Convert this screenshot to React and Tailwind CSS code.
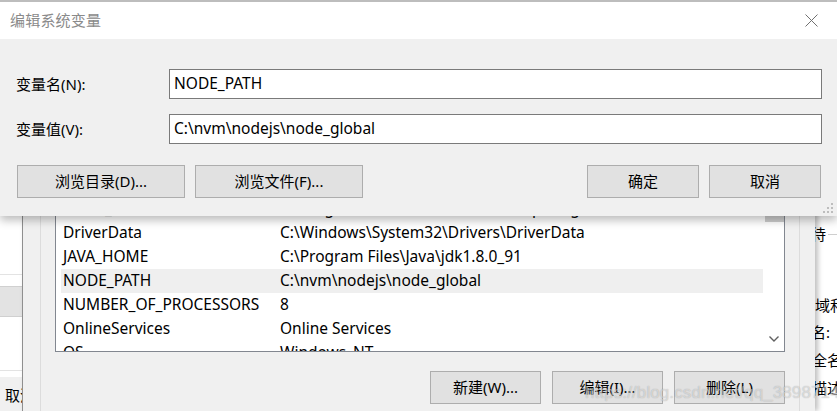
const font = "font-['Noto_Sans','Noto_Sans_CJK_SC',sans-serif]";

const rows = [
  ['ComSpec', 'C:\\Windows\\system32\\cmd.exe'],
  ['configsetroot', 'C:\\Windows\\ConfigSetRoot'],
  ['CUDA_PATH', 'C:\\Program Files\\NVIDIA GPU Computing Toolkit'],
  ['DriverData', 'C:\\Windows\\System32\\Drivers\\DriverData'],
  ['JAVA_HOME', 'C:\\Program Files\\Java\\jdk1.8.0_91'],
  ['NODE_PATH', 'C:\\nvm\\nodejs\\node_global', true],
  ['NUMBER_OF_PROCESSORS', '8'],
  ['OnlineServices', 'Online Services'],
  ['OS', 'Windows_NT'],
];

function WinButton({ children, className }) {
  return (
    <button className={`h-[33px] bg-[#e1e1e1] border border-[#adadad] text-[15px] text-black flex items-center justify-center ${className}`}>
      {children}
    </button>
  );
}

function LeftWindow() {
  return (
    <div className="absolute left-0 top-0 w-[22px] h-[411px] bg-white flex flex-col overflow-hidden">
      <div className="h-[275px] border-b border-[#e3e3e3]" />
      <div className="h-[11px]" />
      <div className="h-[31px] bg-[#e3e3e3] border-y border-[#d0d0d0]" />
      <div className="h-[54px] border-b border-[#e3e3e3]" />
      <div className="h-[6px]" />
      <div className="flex-1 bg-[#f0f0f0] pl-[5px] pt-[8px] text-[15px] leading-[20px] text-black whitespace-nowrap">取消</div>
    </div>
  );
}

function RightWindow() {
  const lines = [
    ['等待', 'pt-[224px]', '-ml-[19px]'],
    ['计算机名、域和工作组设置', 'pt-[51px]', '-ml-[75px]'],
    ['计算机名:', 'pt-[7px]', '-ml-[49px]'],
    ['计算机全名:', 'pt-[8px]', '-ml-[48px]'],
    ['计算机描述:', 'pt-[8px]', '-ml-[48px]'],
  ];
  return (
    <div className="absolute left-[815px] top-0 w-[22px] h-[411px] bg-white overflow-hidden">
      {lines.map(([t, pt, ml], i) => (
        <div key={i} className={`${pt} flex items-center`}>
          <span className={`${ml} shrink-0 text-[15px] leading-[20px] text-black whitespace-nowrap`}>{t}</span>
          {i === 0 && <span className="ml-[2px] shrink-0 h-px w-[20px] bg-[#cfcfcf]" />}
        </div>
      ))}
    </div>
  );
}

function EnvWindow() {
  return (
    <div className="absolute left-[22px] top-0 w-[793px] h-[411px] bg-[#f0f0f0] border-l border-[#8f8f8f] shadow-[3px_0_5px_rgba(0,0,0,0.25)] flex flex-col">
      <div className="flex-1 ml-[17px] mr-[15px] border-x border-[#dcdcdc] px-[14px] pt-[148px] flex flex-col">
        <div className="h-[204px] border border-[#828790] bg-white flex overflow-hidden">
          <div className="flex-1 flex flex-col">
            {rows.map(([k, v, sel]) => (
              <div
                key={k}
                className={`ml-[5px] mr-[1px] h-[24px] shrink-0 flex items-center pl-[2px] text-[15.5px] text-black whitespace-nowrap ${sel ? 'bg-[#efefef]' : ''}`}
              >
                <span className="w-[217px] shrink-0">{k}</span>
                <span>{v}</span>
              </div>
            ))}
          </div>
          <div className="w-[20px] shrink-0 bg-white flex flex-col items-center pt-[59px]">
            <div className="w-[19px] h-[14px] bg-[#cdcdcd]" />
            <div className="flex-1" />
            <svg width="12" height="8" viewBox="0 0 12 8" className="mb-[8px]">
              <path d="M1.5 1.5 L6 6 L10.5 1.5" fill="none" stroke="#606060" strokeWidth="1.4" />
            </svg>
          </div>
        </div>
        <div className="mt-[19px] flex justify-end gap-[11px]">
          <WinButton className="w-[111px] h-[32px]">新建(W)...</WinButton>
          <WinButton className="w-[111px] h-[32px]">编辑(I)...</WinButton>
          <WinButton className="w-[111px] h-[32px]">删除(L)</WinButton>
        </div>
      </div>
    </div>
  );
}

function EditDialog() {
  return (
    <div className="absolute left-0 top-0 w-[837px] border-t-2 border-[#bdbdbd] shadow-[0_4px_9px_rgba(0,0,0,0.28)]">
      <div className="h-[37px] bg-white flex items-center justify-between pl-[10px] pr-[19px]">
        <span className="text-[15px] text-[#8a8a8a] tracking-[0.2px]">编辑系统变量</span>
        <svg width="13" height="13" viewBox="0 0 13 13">
          <path d="M0.5 0.5 L12.5 12.5 M12.5 0.5 L0.5 12.5" stroke="#707070" strokeWidth="1" />
        </svg>
      </div>
      <div className="relative bg-[#f0f0f0] pl-[16px] pr-[15px] pt-[30px] pb-[18px]">
        <div className="grid grid-cols-[153px_1fr] gap-y-[15px] items-center">
          <span className="text-[15px] text-black">变量名(N):</span>
          <div className="h-[30px] bg-white border border-[#7a7a7a] flex items-center pl-[4px] text-[15.5px] text-black">NODE_PATH</div>
          <span className="text-[15px] text-black">变量值(V):</span>
          <div className="h-[30px] bg-white border border-[#7a7a7a] flex items-center pl-[4px] text-[15.5px] text-black">C:\nvm\nodejs\node_global</div>
        </div>
        <div className="mt-[21px] flex items-center pl-[1px]">
          <WinButton className="w-[168px]">浏览目录(D)...</WinButton>
          <WinButton className="w-[168px] ml-[10px]">浏览文件(F)...</WinButton>
          <div className="flex-1" />
          <WinButton className="w-[112px]">确定</WinButton>
          <WinButton className="w-[112px] ml-[10px] mr-[1px]">取消</WinButton>
        </div>
        <svg width="11" height="11" viewBox="0 0 11 11" className="absolute right-[3px] bottom-[2px]">
          <rect x="8" y="0" width="2" height="2" fill="#bdbdbd" />
          <rect x="4" y="4" width="2" height="2" fill="#bdbdbd" />
          <rect x="8" y="4" width="2" height="2" fill="#bdbdbd" />
          <rect x="0" y="8" width="2" height="2" fill="#bdbdbd" />
          <rect x="4" y="8" width="2" height="2" fill="#bdbdbd" />
          <rect x="8" y="8" width="2" height="2" fill="#bdbdbd" />
        </svg>
      </div>
    </div>
  );
}

export default function App() {
  return (
    <div className={`relative w-[837px] h-[411px] overflow-hidden bg-[#f0f0f0] ${font}`}>
      <RightWindow />
      <LeftWindow />
      <EnvWindow />
      <EditDialog />
      <div className="absolute left-[585px] top-[381px] text-[17px] leading-[24px] text-white/50 tracking-[0.1px] pointer-events-none font-['Liberation_Sans',sans-serif] [text-shadow:0_0_1px_rgba(0,0,0,0.3)]">
        https://blog.csdn.net/qq_38987146
      </div>
    </div>
  );
}
